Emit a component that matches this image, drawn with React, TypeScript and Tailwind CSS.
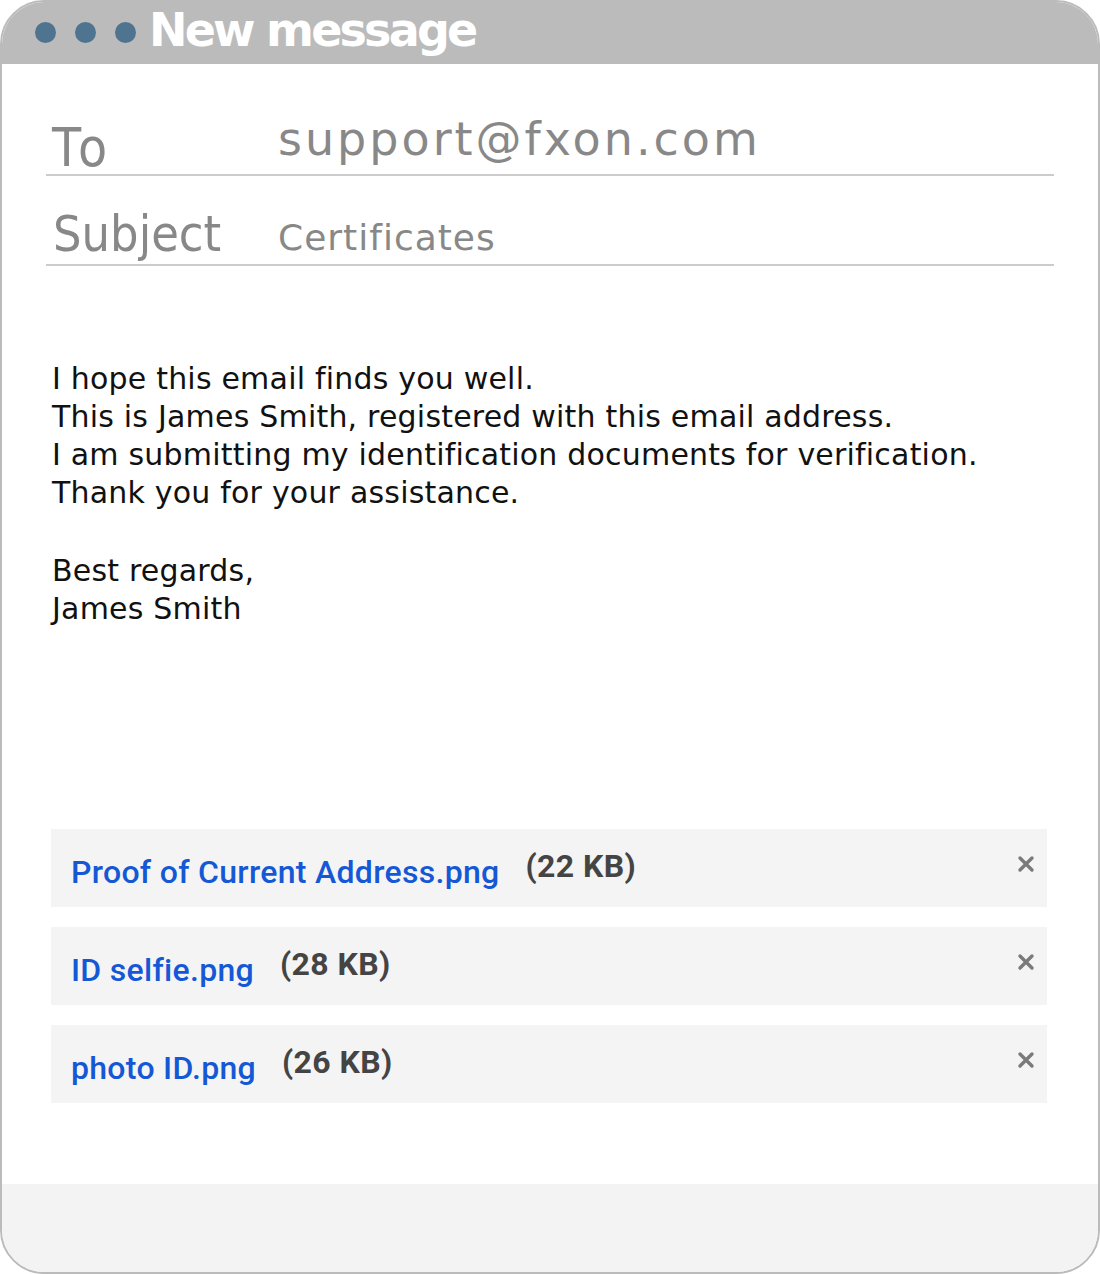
import React from "react";

const files = [
  { name: "Proof of Current Address.png", size: "(22 KB)" },
  { name: "ID selfie.png", size: "(28 KB)" },
  { name: "photo ID.png", size: "(26 KB)" },
];

export default function App() {
  return (
    <div className="w-[1100px] h-[1274px] bg-white">
      <div className="w-full h-full flex flex-col rounded-[44px] border-2 border-[#bbbbbb] overflow-hidden bg-white">
        <div className="h-[62px] shrink-0 bg-[#bbbbbb] flex items-center pl-[33px] gap-[20px]">
          <div className="flex items-center gap-[19px] mt-[-2px]">
            <span className="w-[21px] h-[21px] rounded-full bg-[#4e7490]" />
            <span className="w-[21px] h-[21px] rounded-full bg-[#4e7490]" />
            <span className="w-[21px] h-[21px] rounded-full bg-[#4e7490]" />
          </div>
          <span
            className="text-white font-bold text-[46px] leading-none tracking-[-2.8px] -ml-[7px] mt-[-6px]"
            style={{ fontFamily: '"DejaVu Sans", sans-serif' }}
          >
            New message
          </span>
        </div>

        <div className="flex-1 flex flex-col px-[44px]">
          <div className="mt-[40px] h-[72px] flex items-end border-b-2 border-[#cccccc]">
            <span
              className="w-[232px] pl-[6px] text-[53px] leading-none text-[#888888] tracking-[6px] pb-[0px]"
              style={{ fontFamily: '"DejaVu Sans Condensed", sans-serif' }}
            >
              To
            </span>
            <span
              className="text-[46px] leading-none text-[#888888] tracking-[3px] pb-[12px]"
              style={{ fontFamily: '"DejaVu Sans", sans-serif' }}
            >
              support@fxon.com
            </span>
          </div>
          <div className="h-[90px] flex items-end border-b-2 border-[#cccccc]">
            <span
              className="w-[232px] pl-[7px] text-[50px] leading-none text-[#888888] pb-[5px]"
              style={{ fontFamily: '"DejaVu Sans Condensed", sans-serif' }}
            >
              Subject
            </span>
            <span
              className="text-[36px] leading-none text-[#888888] tracking-[1px] pb-[8px]"
              style={{ fontFamily: '"DejaVu Sans", sans-serif' }}
            >
              Certificates
            </span>
          </div>

          <div
            className="mt-[94px] pl-[6px] text-[30px] leading-[38px] tracking-[0.2px] text-[#111111]"
            style={{ fontFamily: '"DejaVu Sans", sans-serif' }}
          >
            <p>I hope this email finds you well.</p>
            <p>This is James Smith, registered with this email address.</p>
            <p>I am submitting my identification documents for verification.</p>
            <p>Thank you for your assistance.</p>
            <p className="mt-[40px]">Best regards,</p>
            <p>James Smith</p>
          </div>

          <div className="mt-[201px] flex flex-col gap-[20px] pl-[5px] pr-[7px]">
            {files.map((f) => (
              <div
                key={f.name}
                className="h-[78px] bg-[#f4f4f4] flex items-center pl-[20px] pr-[12px]"
                style={{ fontFamily: 'Roboto, "Noto Sans", sans-serif' }}
              >
                <span className="text-[#1558d6] text-[32px] font-medium tracking-[0.3px] mt-[8px]">
                  {f.name}
                </span>
                <span className="ml-[26px] text-[#444444] text-[32px] font-bold tracking-[0.4px] mt-[-4px]">
                  {f.size}
                </span>
                <span className="ml-auto mr-[0px] text-[#7a7a7a] mt-[-8px]">
                  <svg width="18" height="18" viewBox="0 0 18 18">
                    <path
                      d="M3 3 L15 15 M15 3 L3 15"
                      stroke="currentColor"
                      strokeWidth="3.4"
                      strokeLinecap="round"
                    />
                  </svg>
                </span>
              </div>
            ))}
          </div>
        </div>

        <div className="h-[88px] shrink-0 bg-[#f3f3f3]" />
      </div>
    </div>
  );
}
